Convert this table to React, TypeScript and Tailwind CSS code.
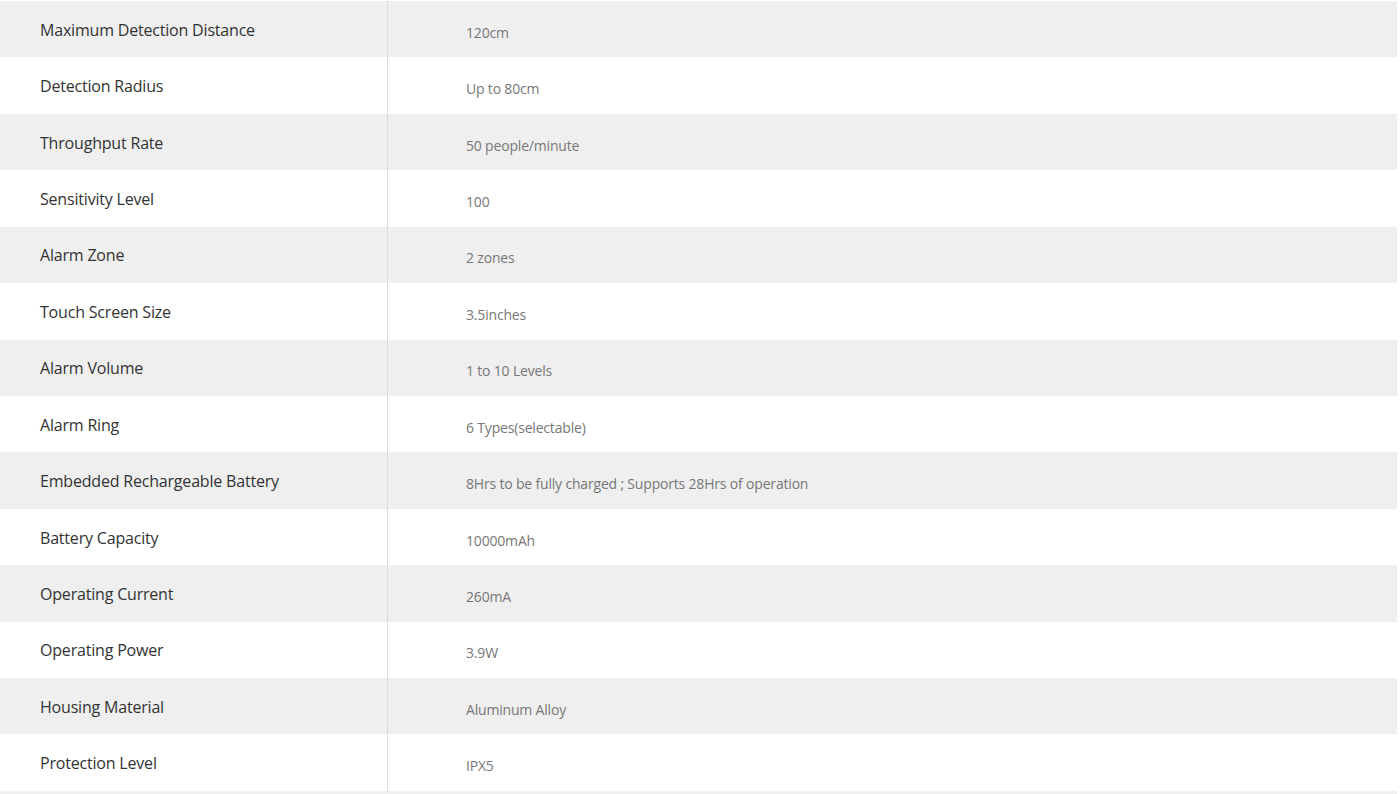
const specs: [string, string][] = [
  ["Maximum Detection Distance", "120cm"],
  ["Detection Radius", "Up to 80cm"],
  ["Throughput Rate", "50 people/minute"],
  ["Sensitivity Level", "100"],
  ["Alarm Zone", "2 zones"],
  ["Touch Screen Size", "3.5inches"],
  ["Alarm Volume", "1 to 10 Levels"],
  ["Alarm Ring", "6 Types(selectable)"],
  ["Embedded Rechargeable Battery", "8Hrs to be fully charged ; Supports 28Hrs of operation"],
  ["Battery Capacity", "10000mAh"],
  ["Operating Current", "260mA"],
  ["Operating Power", "3.9W"],
  ["Housing Material", "Aluminum Alloy"],
  ["Protection Level", "IPX5"],
];

export default function App() {
  return (
    <div className="w-[1400px] h-[794px] bg-white overflow-hidden font-['Open_Sans',sans-serif]">
      <div className="w-[1397px] pt-[1px] border-b-[3px] border-[#f0f0f0]">
        {specs.map(([label, value], i) => (
          <div
            key={label}
            className={`flex h-[56.43px] ${i % 2 === 0 ? "bg-[#efefef]" : "bg-white"}`}
          >
            <div className="w-[388px] shrink-0 flex items-center pl-[40px] pt-[1px] border-r border-[#dcdcdc] text-[16px] tracking-[-0.012em] text-[#333]">
              {label}
            </div>
            <div className="flex-1 flex items-center pl-[78px] pt-[6px] text-[14px] tracking-[-0.013em] text-[#777]">
              {value}
            </div>
          </div>
        ))}
      </div>
    </div>
  );
}
